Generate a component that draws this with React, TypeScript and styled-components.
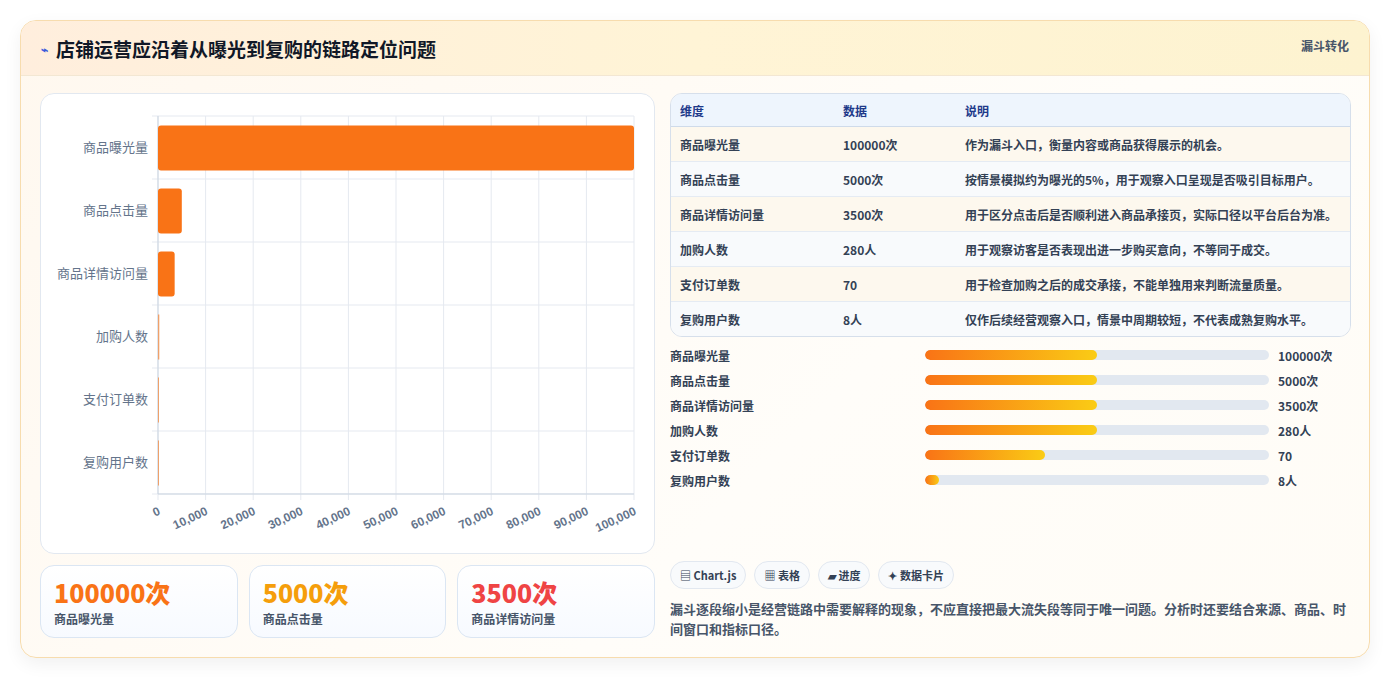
import React from "react";
import styled, { createGlobalStyle } from "styled-components";

const Global = createGlobalStyle`
  html, body { margin: 0; padding: 0; background: #f4f4f5; }
  body { font-family: "Noto Sans CJK SC", "Noto Sans", sans-serif; color: #1e293b; }
`;

const Page = styled.div`
  padding: 20px 20px 21px 20px;
  box-sizing: border-box;
  width: 1390px;
  height: 679px;
  background: #fff;
`;
const Card = styled.div`
  height: 638px;
  box-sizing: border-box;
  border: 1px solid #f7dcae;
  border-radius: 16px;
  background: linear-gradient(135deg, #fff8ef, #fffdf9 60%, #fffcf6);
  box-shadow: 0 6px 18px rgba(0,0,0,0.06);
  overflow: hidden;
  display: flex;
  flex-direction: column;
`;
const Header = styled.div`
  height: 55px;
  box-sizing: border-box;
  display: flex;
  align-items: center;
  justify-content: space-between;
  padding: 0 20px;
  background: linear-gradient(90deg, #ffeedd, #fff4d6 50%, #fdf3d0);
  border-bottom: 1px solid #f3e7d3;
`;
const Title = styled.h1`
  margin: 0;
  font-size: 19px;
  font-weight: 700;
  color: #111827;
  display: flex;
  align-items: center;
  gap: 8px;
`;
const Bolt = styled.span`
  font-size: 12px;
  color: #3b5bdb;
`;
const Tag = styled.div`
  align-self: flex-start;
  margin-top: 16px;
  font-size: 12px;
  font-weight: 700;
  color: #475569;
`;
const Body = styled.div`
  flex: 1;
  display: grid;
  grid-template-columns: 615px 1fr;
  gap: 15px;
  padding: 17px 18px 18px 19px;
`;
const Left = styled.div`
  display: flex;
  flex-direction: column;
  gap: 11px;
`;
const ChartPanel = styled.div`
  height: 461px;
  box-sizing: border-box;
  background: #fff;
  border: 1px solid #e2e8f0;
  border-radius: 14px;
`;
const Stats = styled.div`
  display: grid;
  grid-template-columns: repeat(3, 1fr);
  gap: 11px;
`;
const Stat = styled.div`
  height: 73px;
  box-sizing: border-box;
  border: 1px solid #dbe6f3;
  border-radius: 14px;
  background: linear-gradient(180deg, #fff, #f7faff);
  padding: 9px 13px;
`;
const StatValue = styled.div<{ $c: string }>`
  font-size: 25px;
  font-weight: 800;
  line-height: 34px;
  color: ${p => p.$c};
`;
const StatLabel = styled.div`
  font-size: 12px;
  font-weight: 700;
  color: #475569;
  margin-top: 1px;
`;
const Right = styled.div`
  display: flex;
  flex-direction: column;
`;
const Table = styled.table`
  width: 100%;
  border-collapse: separate;
  border-spacing: 0;
  border: 1px solid #d6dfeb;
  border-radius: 12px;
  overflow: hidden;
  font-size: 12px;
  font-weight: 700;
`;
const Th = styled.th`
  text-align: left;
  height: 32px;
  padding: 0 9px;
  background: #eef5fd;
  color: #1e3a8a;
  font-weight: 700;
  border-bottom: 1px solid #cfdbea;
`;
const Tr = styled.tr<{ $odd: boolean }>`
  background: ${p => (p.$odd ? "#fdf8ee" : "#f8fafc")};
`;
const Td = styled.td<{ $last: boolean }>`
  height: 34px;
  padding: 0 9px;
  color: #334155;
  border-bottom: ${p => (p.$last ? "none" : "1px solid #e5ebf3")};
`;
const Progress = styled.div`
  margin-top: 9px;
  display: flex;
  flex-direction: column;
  gap: 7px;
`;
const PRow = styled.div`
  display: grid;
  grid-template-columns: 255px 353px 1fr;
  align-items: center;
  gap: 0;
  height: 18px;
  font-size: 12px;
  font-weight: 700;
  color: #334155;
`;
const Track = styled.div`
  height: 10px;
  border-radius: 5px;
  background: #e2e8f0;
  overflow: hidden;
  margin-right: 9px;
`;
const Fill = styled.div`
  height: 100%;
  border-radius: 5px;
  background: linear-gradient(90deg, #f97316, #facc15);
`;
const Chips = styled.div`
  margin-top: auto;
  display: flex;
  gap: 8px;
`;
const Chip = styled.div`
  height: 28px;
  box-sizing: border-box;
  padding: 0 9px;
  border: 1px solid #e2e8f0;
  border-radius: 14px;
  background: #f8fafc;
  display: flex;
  align-items: center;
  gap: 4px;
  font-size: 11px;
  font-weight: 700;
  color: #334155;
`;
const Note = styled.p`
  margin: 10px 0 0;
  font-size: 13px;
  line-height: 20px;
  font-weight: 700;
  color: #475569;
`;

const rows = [
  ["商品曝光量", "100000次", "作为漏斗入口，衡量内容或商品获得展示的机会。", 100000, 50],
  ["商品点击量", "5000次", "按情景模拟约为曝光的5%，用于观察入口呈现是否吸引目标用户。", 5000, 50],
  ["商品详情访问量", "3500次", "用于区分点击后是否顺利进入商品承接页，实际口径以平台后台为准。", 3500, 50],
  ["加购人数", "280人", "用于观察访客是否表现出进一步购买意向，不等同于成交。", 280, 50],
  ["支付订单数", "70", "用于检查加购之后的成交承接，不能单独用来判断流量质量。", 70, 35],
  ["复购用户数", "8人", "仅作后续经营观察入口，情景中周期较短，不代表成熟复购水平。", 8, 4],
] as const;

function Chart() {
  const x0 = 117, x1 = 593, y0 = 22, rowH = 63;
  const w = x1 - x0;
  const ticks = Array.from({ length: 11 }, (_, i) => i);
  return (
    <svg width="613" height="459" style={{ display: "block" }}>
      {ticks.map(i => (
        <line key={i} x1={x0 + (w * i) / 10} x2={x0 + (w * i) / 10} y1={y0} y2={y0 + rowH * 6 + 6} stroke="#e5e9f0" />
      ))}
      {Array.from({ length: 7 }, (_, i) => (
        <line key={i} x1={x0 - 6} x2={x1} y1={y0 + rowH * i} y2={y0 + rowH * i} stroke="#e5e9f0" />
      ))}
      <line x1={x0} x2={x0} y1={y0} y2={y0 + rowH * 6} stroke="#cbd5e1" />
      <line x1={x0} x2={x1} y1={y0 + rowH * 6} y2={y0 + rowH * 6} stroke="#cbd5e1" />
      {rows.map((r, i) => {
        const bw = Math.max(1, (w * (r[3] as number)) / 100000);
        const cy = y0 + rowH * i + rowH / 2;
        return (
          <g key={i}>
            <rect x={x0} y={cy - 22} width={bw} height={45} rx={bw > 6 ? 3 : 0} fill="#f97316" opacity={bw > 2 ? 1 : 0.6} />
            <text x={x0 - 10} y={cy + 4} textAnchor="end" fontSize="13" fill="#64748b" fontFamily="Noto Sans CJK SC, sans-serif">{r[0]}</text>
          </g>
        );
      })}
      {ticks.map(i => {
        const x = x0 + (w * i) / 10 + 3;
        const y = y0 + rowH * 6 + 20;
        return (
          <text key={i} x={x} y={y} transform={`rotate(-25 ${x} ${y})`} textAnchor="end" fontSize="12" fontWeight="700" fill="#64748b" fontFamily="Liberation Sans, Arial, sans-serif">
            {i === 0 ? "0" : (i * 10000).toLocaleString("en-US")}
          </text>
        );
      })}
    </svg>
  );
}

export default function App() {
  return (
    <Page>
      <Global />
      <Card>
        <Header>
          <Title><Bolt>⌁</Bolt>店铺运营应沿着从曝光到复购的链路定位问题</Title>
          <Tag>漏斗转化</Tag>
        </Header>
        <Body>
          <Left>
            <ChartPanel><Chart /></ChartPanel>
            <Stats>
              <Stat><StatValue $c="#f97316">100000次</StatValue><StatLabel>商品曝光量</StatLabel></Stat>
              <Stat><StatValue $c="#f59e0b">5000次</StatValue><StatLabel>商品点击量</StatLabel></Stat>
              <Stat><StatValue $c="#ef4444">3500次</StatValue><StatLabel>商品详情访问量</StatLabel></Stat>
            </Stats>
          </Left>
          <Right>
            <Table>
              <colgroup><col style={{ width: 163 }} /><col style={{ width: 122 }} /><col /></colgroup>
              <thead><tr><Th>维度</Th><Th>数据</Th><Th>说明</Th></tr></thead>
              <tbody>
                {rows.map((r, i) => (
                  <Tr key={i} $odd={i % 2 === 0}>
                    <Td $last={i === 5}>{r[0]}</Td>
                    <Td $last={i === 5}>{r[1]}</Td>
                    <Td $last={i === 5}>{r[2]}</Td>
                  </Tr>
                ))}
              </tbody>
            </Table>
            <Progress>
              {rows.map((r, i) => (
                <PRow key={i}>
                  <span>{r[0]}</span>
                  <Track><Fill style={{ width: `${r[4]}%` }} /></Track>
                  <span>{r[1]}</span>
                </PRow>
              ))}
            </Progress>
            <Chips>
              <Chip>▤ Chart.js</Chip>
              <Chip>▦ 表格</Chip>
              <Chip>▰ 进度</Chip>
              <Chip>✦ 数据卡片</Chip>
            </Chips>
            <Note>漏斗逐段缩小是经营链路中需要解释的现象，不应直接把最大流失段等同于唯一问题。分析时还要结合来源、商品、时间窗口和指标口径。</Note>
          </Right>
        </Body>
      </Card>
    </Page>
  );
}
